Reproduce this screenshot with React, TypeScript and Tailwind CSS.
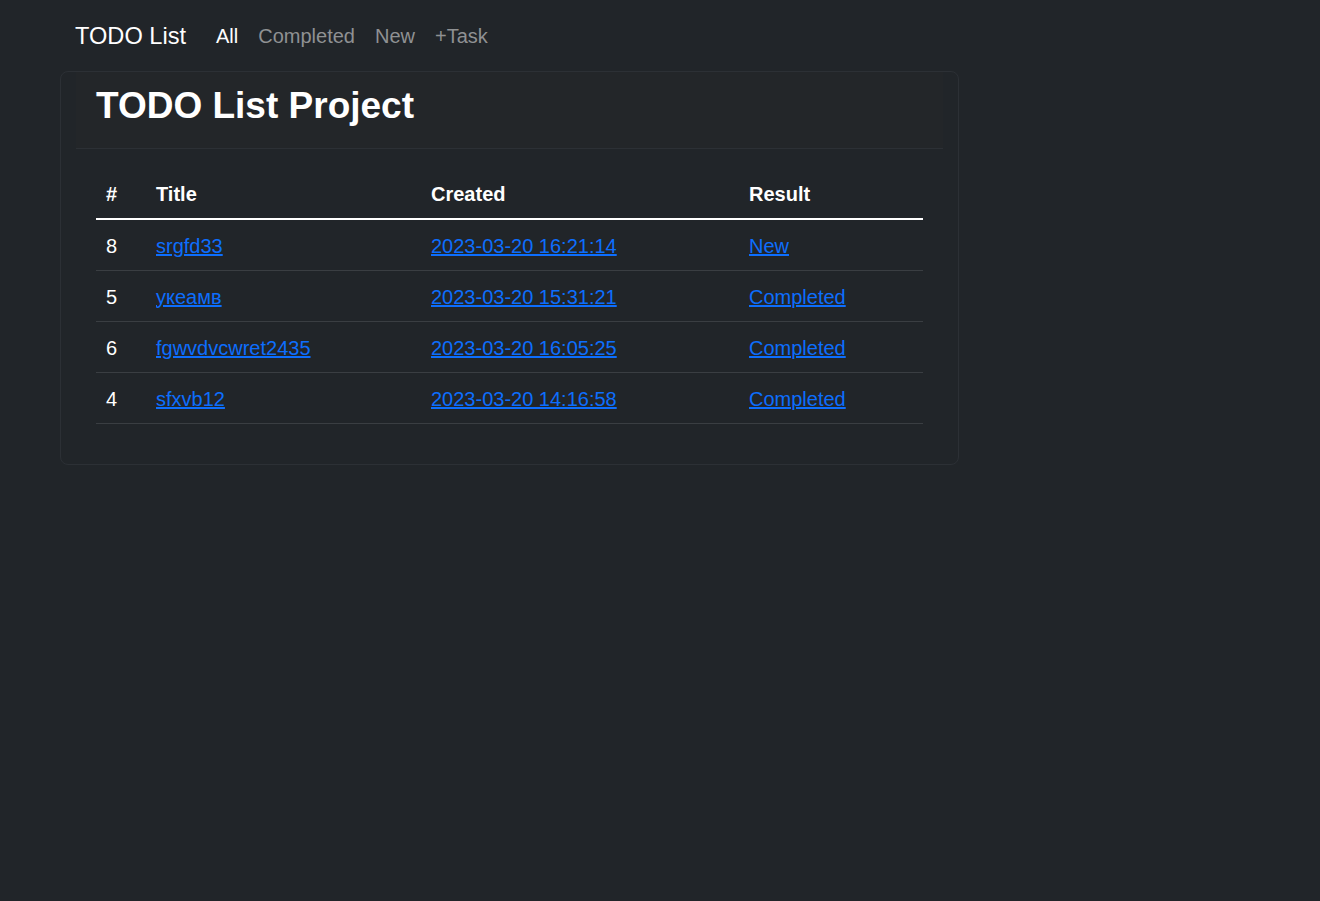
import React from 'react';

const tasks = [
  { id: 8, title: 'srgfd33', created: '2023-03-20 16:21:14', result: 'New' },
  { id: 5, title: 'укеамв', created: '2023-03-20 15:31:21', result: 'Completed' },
  { id: 6, title: 'fgwvdvcwret2435', created: '2023-03-20 16:05:25', result: 'Completed' },
  { id: 4, title: 'sfxvb12', created: '2023-03-20 14:16:58', result: 'Completed' },
];

function App() {
  return (
    <div className="min-h-[901px] bg-[#212529] text-white font-['Liberation_Sans','Noto_Sans',sans-serif]">
      <div className="w-[1200px] mx-auto">
        <nav className="h-[71px] flex items-center px-[15px]">
          <a href="#" className="text-[23.6px] leading-[30px] text-white mr-[20px] pt-[1px]">TODO List</a>
          <div className="flex items-center text-[20px] leading-[30px] pt-[1px]">
            <a href="#" className="px-[10px] text-white">All</a>
            <a href="#" className="px-[10px] text-[#8f9193]">Completed</a>
            <a href="#" className="px-[10px] text-[#8f9193]">New</a>
            <a href="#" className="px-[10px] text-[#8f9193]">+Task</a>
          </div>
        </nav>
        <div className="w-[899px] border border-[#2c3035] rounded-[8px] px-[15px] pb-[20px]">
          <div className="bg-[#232629] border-b border-[#2c3035] px-[20px] pt-[11px] pb-[9px]">
            <h2 className="text-[37px] leading-[46px] font-bold mb-[10px]">TODO List Project</h2>
          </div>
          <div className="px-[20px] pt-[19px]">
            <table className="w-full text-[20px] leading-[30px] border-collapse mb-[20px]">
              <thead>
                <tr className="border-b-2 border-white">
                  <th className="text-left font-bold px-[10px] pt-[11px] pb-[9px] w-[50px]">#</th>
                  <th className="text-left font-bold px-[10px] pt-[11px] pb-[9px] w-[275px]">Title</th>
                  <th className="text-left font-bold px-[10px] pt-[11px] pb-[9px] w-[318px]">Created</th>
                  <th className="text-left font-bold px-[10px] pt-[11px] pb-[9px]">Result</th>
                </tr>
              </thead>
              <tbody>
                {tasks.map((t) => (
                  <tr key={t.id} className="border-b border-[#3a3e42]">
                    <td className="px-[10px] pt-[11px] pb-[9px]">{t.id}</td>
                    <td className="px-[10px] pt-[11px] pb-[9px]">
                      <a href="#" className="text-[#0d6efd] underline">{t.title}</a>
                    </td>
                    <td className="px-[10px] pt-[11px] pb-[9px]">
                      <a href="#" className="text-[#0d6efd] underline">{t.created}</a>
                    </td>
                    <td className="px-[10px] pt-[11px] pb-[9px]">
                      <a href="#" className="text-[#0d6efd] underline">{t.result}</a>
                    </td>
                  </tr>
                ))}
              </tbody>
            </table>
          </div>
        </div>
      </div>
    </div>
  );
}

export default App;
